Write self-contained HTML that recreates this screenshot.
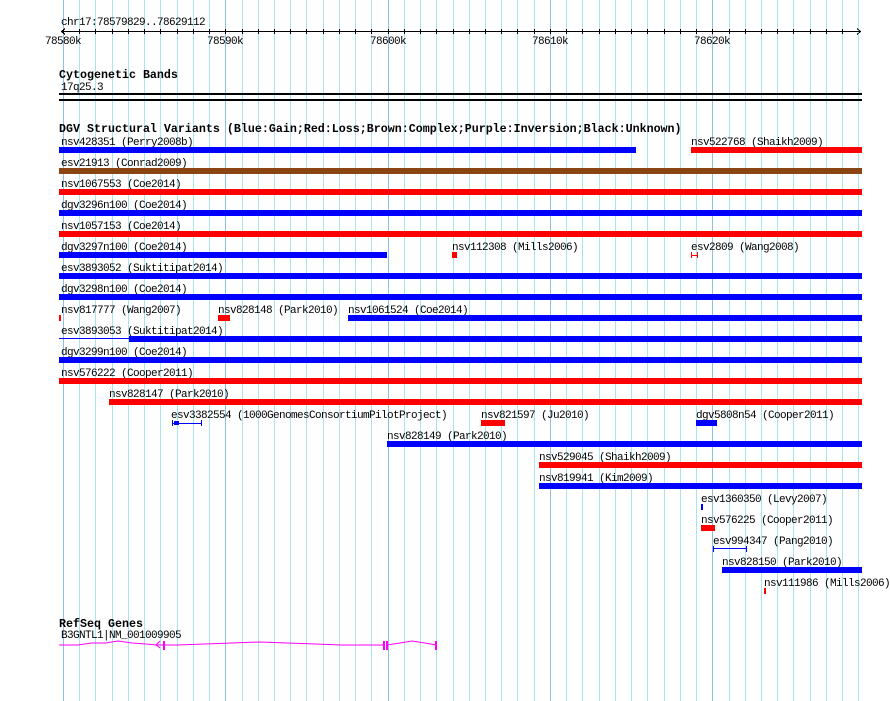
<!DOCTYPE html>
<html><head><meta charset="utf-8"><style>
html,body{margin:0;padding:0;background:#fff;}
svg{display:block;}
text{font-family:"Liberation Mono","DejaVu Sans Mono",monospace;font-size:11px;letter-spacing:-0.6px;fill:#000;}
.h{font-weight:bold;font-size:11.67px;letter-spacing:0;}
</style></head><body>
<svg width="890" height="701" viewBox="0 0 890 701" xmlns="http://www.w3.org/2000/svg" shape-rendering="crispEdges">
<g stroke="#a8e6ee" stroke-width="1">
<line x1="79.5" y1="0" x2="79.5" y2="701"/><line x1="95.5" y1="0" x2="95.5" y2="701"/><line x1="112.5" y1="0" x2="112.5" y2="701"/><line x1="128.5" y1="0" x2="128.5" y2="701"/><line x1="144.5" y1="0" x2="144.5" y2="701"/><line x1="160.5" y1="0" x2="160.5" y2="701"/><line x1="177.5" y1="0" x2="177.5" y2="701"/><line x1="193.5" y1="0" x2="193.5" y2="701"/><line x1="209.5" y1="0" x2="209.5" y2="701"/>
<line x1="242.5" y1="0" x2="242.5" y2="701"/><line x1="258.5" y1="0" x2="258.5" y2="701"/><line x1="274.5" y1="0" x2="274.5" y2="701"/><line x1="290.5" y1="0" x2="290.5" y2="701"/><line x1="306.5" y1="0" x2="306.5" y2="701"/><line x1="323.5" y1="0" x2="323.5" y2="701"/><line x1="339.5" y1="0" x2="339.5" y2="701"/><line x1="355.5" y1="0" x2="355.5" y2="701"/><line x1="371.5" y1="0" x2="371.5" y2="701"/>
<line x1="404.5" y1="0" x2="404.5" y2="701"/><line x1="420.5" y1="0" x2="420.5" y2="701"/><line x1="436.5" y1="0" x2="436.5" y2="701"/><line x1="453.5" y1="0" x2="453.5" y2="701"/><line x1="469.5" y1="0" x2="469.5" y2="701"/><line x1="485.5" y1="0" x2="485.5" y2="701"/><line x1="501.5" y1="0" x2="501.5" y2="701"/><line x1="517.5" y1="0" x2="517.5" y2="701"/><line x1="534.5" y1="0" x2="534.5" y2="701"/>
<line x1="566.5" y1="0" x2="566.5" y2="701"/><line x1="582.5" y1="0" x2="582.5" y2="701"/><line x1="599.5" y1="0" x2="599.5" y2="701"/><line x1="615.5" y1="0" x2="615.5" y2="701"/><line x1="631.5" y1="0" x2="631.5" y2="701"/><line x1="647.5" y1="0" x2="647.5" y2="701"/><line x1="664.5" y1="0" x2="664.5" y2="701"/><line x1="680.5" y1="0" x2="680.5" y2="701"/><line x1="696.5" y1="0" x2="696.5" y2="701"/>
<line x1="729.5" y1="0" x2="729.5" y2="701"/><line x1="745.5" y1="0" x2="745.5" y2="701"/><line x1="761.5" y1="0" x2="761.5" y2="701"/><line x1="777.5" y1="0" x2="777.5" y2="701"/><line x1="793.5" y1="0" x2="793.5" y2="701"/><line x1="810.5" y1="0" x2="810.5" y2="701"/><line x1="826.5" y1="0" x2="826.5" y2="701"/><line x1="842.5" y1="0" x2="842.5" y2="701"/><line x1="858.5" y1="0" x2="858.5" y2="701"/>
</g>
<g stroke="#8cc0e4" stroke-width="1">
<line x1="63.5" y1="0" x2="63.5" y2="701"/><line x1="225.5" y1="0" x2="225.5" y2="701"/><line x1="388.5" y1="0" x2="388.5" y2="701"/><line x1="550.5" y1="0" x2="550.5" y2="701"/><line x1="712.5" y1="0" x2="712.5" y2="701"/>
</g>
<!-- ruler -->
<text x="61" y="25">chr17:78579829..78629112</text>
<line x1="61" y1="31.5" x2="861" y2="31.5" stroke="#000"/>
<path d="M65 28.5 L61.5 31.5 L65 34.5 M857 28.5 L860.5 31.5 L857 34.5" stroke="#000" fill="none"/>
<g stroke="#000">
<path d="M63.5 29v5M79.5 29v5M95.5 29v5M112.5 29v5M128.5 29v5M144.5 29v5M160.5 29v5M177.5 29v5M193.5 29v5M209.5 29v5M225.5 29v5M242.5 29v5M258.5 29v5M274.5 29v5M290.5 29v5M306.5 29v5M323.5 29v5M339.5 29v5M355.5 29v5M371.5 29v5M388.5 29v5M404.5 29v5M420.5 29v5M436.5 29v5M453.5 29v5M469.5 29v5M485.5 29v5M501.5 29v5M517.5 29v5M534.5 29v5M550.5 29v5M566.5 29v5M582.5 29v5M599.5 29v5M615.5 29v5M631.5 29v5M647.5 29v5M664.5 29v5M680.5 29v5M696.5 29v5M712.5 29v5M729.5 29v5M745.5 29v5M761.5 29v5M777.5 29v5M793.5 29v5M810.5 29v5M826.5 29v5M842.5 29v5"/>
</g>
<text x="45" y="44">78580k</text>
<text x="207" y="44">78590k</text>
<text x="370" y="44">78600k</text>
<text x="532" y="44">78610k</text>
<text x="694" y="44">78620k</text>
<!-- cytobands -->
<text class="h" x="59" y="78">Cytogenetic Bands</text>
<text x="61" y="90">17q25.3</text>
<rect x="59" y="93" width="803" height="2" fill="#000"/>
<rect x="59" y="99" width="803" height="2" fill="#000"/>
<!-- DGV -->
<text class="h" x="59" y="132">DGV Structural Variants (Blue:Gain;Red:Loss;Brown:Complex;Purple:Inversion;Black:Unknown)</text>
<text x="61" y="145">nsv428351 (Perry2008b)</text><rect x="59" y="147" width="577" height="6" fill="#0000ff"/>
<text x="691" y="145">nsv522768 (Shaikh2009)</text><rect x="691" y="147" width="171" height="6" fill="#ff0000"/>
<text x="61" y="166">esv21913 (Conrad2009)</text><rect x="59" y="168" width="803" height="6" fill="#8b4513"/>
<text x="61" y="187">nsv1067553 (Coe2014)</text><rect x="59" y="189" width="803" height="6" fill="#ff0000"/>
<text x="61" y="208">dgv3296n100 (Coe2014)</text><rect x="59" y="210" width="803" height="6" fill="#0000ff"/>
<text x="61" y="229">nsv1057153 (Coe2014)</text><rect x="59" y="231" width="803" height="6" fill="#ff0000"/>
<text x="61" y="250">dgv3297n100 (Coe2014)</text><rect x="59" y="252" width="328" height="6" fill="#0000ff"/>
<text x="452" y="250">nsv112308 (Mills2006)</text><rect x="452" y="252" width="5" height="6" fill="#ff0000"/>
<text x="691" y="250">esv2809 (Wang2008)</text><path d="M691.5 252v6M697.5 252v6M691 255.5h7" stroke="#ff0000"/>
<text x="61" y="271">esv3893052 (Suktitipat2014)</text><rect x="59" y="273" width="803" height="6" fill="#0000ff"/>
<text x="61" y="292">dgv3298n100 (Coe2014)</text><rect x="59" y="294" width="803" height="6" fill="#0000ff"/>
<text x="61" y="313">nsv817777 (Wang2007)</text><rect x="59" y="315" width="2" height="6" fill="#ff0000"/>
<text x="218" y="313">nsv828148 (Park2010)</text><rect x="218" y="315" width="12" height="6" fill="#ff0000"/>
<text x="348" y="313">nsv1061524 (Coe2014)</text><rect x="348" y="315" width="514" height="6" fill="#0000ff"/>
<text x="61" y="334">esv3893053 (Suktitipat2014)</text><rect x="59" y="338" width="70" height="1" fill="#0000ff"/><rect x="129" y="336" width="733" height="6" fill="#0000ff"/>
<text x="61" y="355">dgv3299n100 (Coe2014)</text><rect x="59" y="357" width="803" height="6" fill="#0000ff"/>
<text x="61" y="376">nsv576222 (Cooper2011)</text><rect x="59" y="378" width="803" height="6" fill="#ff0000"/>
<text x="109" y="397">nsv828147 (Park2010)</text><rect x="109" y="399" width="753" height="6" fill="#ff0000"/>
<text x="171" y="418">esv3382554 (1000GenomesConsortiumPilotProject)</text><path d="M172.5 420v6M201.5 420v6M172 423.5h30" stroke="#0000ff"/><rect x="174" y="421" width="5" height="4" fill="#0000ff"/>
<text x="481" y="418">nsv821597 (Ju2010)</text><rect x="481" y="420" width="24" height="6" fill="#ff0000"/>
<text x="696" y="418">dgv5808n54 (Cooper2011)</text><rect x="696" y="420" width="21" height="6" fill="#0000ff"/>
<text x="387" y="439">nsv828149 (Park2010)</text><rect x="387" y="441" width="475" height="6" fill="#0000ff"/>
<text x="539" y="460">nsv529045 (Shaikh2009)</text><rect x="539" y="462" width="323" height="6" fill="#ff0000"/>
<text x="539" y="481">nsv819941 (Kim2009)</text><rect x="539" y="483" width="323" height="6" fill="#0000ff"/>
<text x="701" y="502">esv1360350 (Levy2007)</text><rect x="701" y="504" width="2" height="6" fill="#0000ff"/>
<text x="701" y="523">nsv576225 (Cooper2011)</text><rect x="701" y="525" width="14" height="6" fill="#ff0000"/>
<text x="713" y="544">esv994347 (Pang2010)</text><path d="M713.5 546v6M746.5 546v6M713 548.5h34" stroke="#0000ff"/>
<text x="722" y="565">nsv828150 (Park2010)</text><rect x="722" y="567" width="140" height="6" fill="#0000ff"/>
<text x="764" y="586">nsv111986 (Mills2006)</text><rect x="764" y="588" width="2" height="6" fill="#ff0000"/>
<!-- RefSeq -->
<text class="h" x="59" y="627">RefSeq Genes</text>
<text x="61" y="638">B3GNTL1|NM_001009905</text>
<g stroke="#ff00ff" fill="none" shape-rendering="auto">
<polyline points="59,645 78,645 92,643 106,643 118,641 132,643 146,644 157,645 163,645 177,645 205,644 232,643 260,642 287,643 315,644 342,645 371,645 384,645"/>
<polyline points="387,645 400,643 412,641 425,643 436,645"/>
<path d="M160 641 L156 645 L160 648"/>
</g>
<g fill="#ff00ff">
<rect x="163" y="641" width="2" height="9"/>
<rect x="383" y="641" width="2" height="9"/>
<rect x="386" y="641" width="2" height="9"/>
<rect x="435" y="641" width="2" height="9"/>
</g>
</svg>
</body></html>
